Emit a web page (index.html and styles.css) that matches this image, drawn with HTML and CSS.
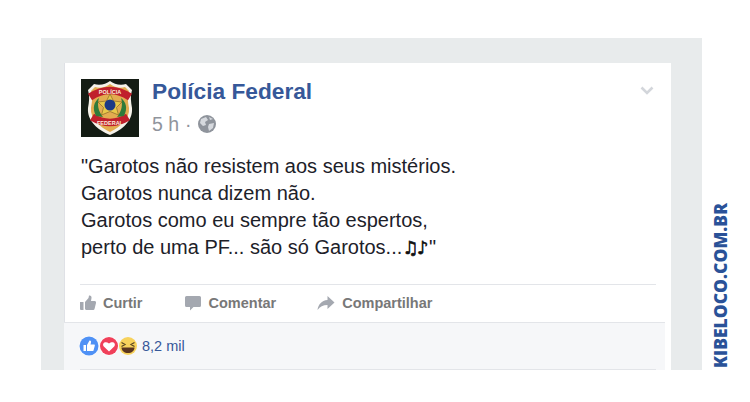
FILE: index.html
```html
<!DOCTYPE html>
<html lang="pt-BR">
<head>
<meta charset="utf-8">
<title>Polícia Federal</title>
<link rel="stylesheet" href="styles.css">
</head>
<body>
<div class="stage">
  <main class="panel">
    <article class="card">
      <header class="head">
        <svg class="avatar" viewBox="0 0 58 58" aria-label="Brasão da Polícia Federal">
          <rect width="58" height="58" fill="#141c14"/>
          <path d="M29 2 C33 5 39 7 45 5 L51 11 C49 17 50 23 51 29 C52 42 41 51 29 56 C17 51 6 42 7 29 C8 23 9 17 7 11 L13 5 C19 7 25 5 29 2Z" fill="#f6f2ea"/>
          <path d="M29 5 C33 8 39 10 44 8 L48 12 C46 18 47 23 48 29 C49 40 39 48 29 53 C19 48 9 40 10 29 C11 23 12 18 10 12 L14 8 C19 10 25 8 29 5Z" fill="#e3ac50"/>
          <path d="M9 18 Q29 5 49 18" fill="none" stroke="#c0202c" stroke-width="7.500"/>
          <text class="badge-text" x="29" y="15" text-anchor="middle">POLÍCIA</text>
          <path d="M11 38 Q29 49 47 38" fill="none" stroke="#c0202c" stroke-width="7.500"/>
          <text class="badge-text" x="29" y="46" text-anchor="middle">FEDERAL</text>
          <path d="M15 37 C11 29 13 23 18 19 C16 25 17 32 22 38Z M43 37 C47 29 45 23 40 19 C42 25 41 32 36 38Z" fill="#2f7a3a"/>
          <path d="M29 15 L32.500 22 L41 23 L35.500 28.500 L37.500 36 L29 32.500 L20.500 36 L22.500 28.500 L17 23 L25.500 22Z" fill="#e8c84a" stroke="#7a5a20" stroke-width=".6"/>
          <circle cx="29" cy="26" r="5.500" fill="#1c3a86"/>
        </svg>
        <div class="meta">
          <a class="name">Polícia Federal</a>
          <div class="time">
            <span>5 h</span><span class="dot">·</span>
            <svg class="globe" viewBox="0 0 18 18"><circle cx="9" cy="9" r="9" fill="#8f949c"/><path d="M3 4 L8 2 L10 5 L7 7 L8 10 L5 11 L2 8Z M11 9 L16 8 L15 13 L11 16 L10 12Z M11 2 L15 4 L12 5Z" fill="#d6d9de"/></svg>
          </div>
        </div>
        <svg class="chevron" viewBox="0 0 14 9"><path d="M1.500 1.500 L7 7 L12.500 1.500" fill="none" stroke="#d3d6db" stroke-width="2.600"/></svg>
      </header>
      <div class="message">
        <p>"Garotos não resistem aos seus mistérios.</p>
        <p>Garotos nunca dizem não.</p>
        <p>Garotos como eu sempre tão espertos,</p>
        <p>perto de uma PF... são só Garotos...<span class="notes">♫♪</span>"</p>
      </div>
      <nav class="actions">
        <a class="action act-like">
          <svg viewBox="0 0 16 16"><path d="M0 7h3.500v8H1a1 1 0 0 1-1-1Z M5 7 8.500 3 9 0.500c1.500-.5 2.800.8 2.500 2.500L11 6h3.500c1.300 0 1.800 1 1.500 2l-1.500 6c-.2.700-.8 1-1.500 1H7c-1 0-2-.6-2-1Z" fill="#a4a8b0"/></svg>
          Curtir</a>
        <a class="action act-comment">
          <svg viewBox="0 0 16 16"><path d="M1.500 1h13A1.500 1.500 0 0 1 16 2.500v8a1.500 1.500 0 0 1-1.500 1.500H8.500L5 15.500V12H1.500A1.500 1.500 0 0 1 0 10.500v-8A1.500 1.500 0 0 1 1.500 1Z" fill="#a4a8b0"/></svg>
          Comentar</a>
        <a class="action act-share">
          <svg viewBox="0 0 17 16"><path d="M10 1 17 7.500 10 14V10C5.500 10 2.500 11.500 0 15 .8 9.500 4 5.500 10 5Z" fill="#a4a8b0"/></svg>
          Compartilhar</a>
      </nav>
      <footer class="reactions">
        <div class="reaction-row">
          <svg class="faces" viewBox="0 0 58 20">
            <circle cx="49" cy="10" r="9" fill="#f7d25c"/>
            <path d="M42.500 6.500l3.500 2-3.500 2M55.500 6.500l-3.500 2 3.500 2" fill="none" stroke="#5a4520" stroke-width="1.200"/>
            <path d="M42.500 11.500h13c0 3.500-3 5.500-6.500 5.500s-6.500-2-6.500-5.500Z" fill="#5a3520"/>
            <circle cx="30" cy="10" r="9.500" fill="#fff"/>
            <circle cx="30" cy="10" r="9" fill="#f0405a"/>
            <path d="M30 15.500 24.800 10.500c-2.300-3 1.500-6 5.200-3 3.700-3 7.500 0 5.200 3Z" fill="#fff"/>
            <circle cx="10" cy="10" r="10" fill="#fff"/>
            <circle cx="10" cy="10" r="9.500" fill="#4f91f5"/>
            <path d="M4.500 9h2.500v6H4.500Z M8 9 10.500 4.500c1.200-.3 1.800.6 1.500 2L11.500 8.500H15c.8 0 1 .7.800 1.300L14.500 14.500c-.1.400-.4.500-.8.500H8Z" fill="#fff"/>
          </svg>
          <span class="count">8,2 mil</span>
        </div>
      </footer>
    </article>
  </main>
  <aside class="mark">KIBELOCO.COM.BR</aside>
</div>
</body>
</html>
```

FILE: styles.css
```css
* { box-sizing: border-box; }
html, body { margin: 0; padding: 0; background: #fff; }
body { width: 750px; height: 402px; overflow: hidden; font-family: "Liberation Sans", Arial, sans-serif; }
p { margin: 0; }

.stage { display: flex; align-items: flex-start; padding: 38px 0 0 41px; }

.panel {
  width: 661px;
  height: 332px;
  padding: 25px 31px 0 23px;
  background: #e8ebec;
}

.card {
  width: 607px;
  height: 307px;
  background: #fff;
  box-shadow: inset 1px 0 0 #dfe1e6;
  display: flex;
  flex-direction: column;
}

.head { display: flex; padding: 16px 17px 0 17px; height: 74px; }
.avatar { width: 58px; height: 58px; flex: none; }
.badge-text { font-family: "Liberation Sans", sans-serif; font-size: 5.500px; font-weight: 700; fill: #fbeede; }
.meta { margin-left: 13px; flex: 1; margin-top: -1px; }
.name { display: block; font-size: 22.700px; line-height: 26px; font-weight: 700; color: #365899; }
.time { display: flex; align-items: center; margin-top: 8px; font-size: 19.500px; line-height: 24px; color: #90949c; }
.dot { margin: 0 6px; }
.globe { width: 18px; height: 18px; }
.chevron { width: 14px; height: 9px; margin-top: 7px; }

.message { padding: 16px 16px 0 17px; height: 147px; font-size: 20px; line-height: 27px; color: #1d2129; }
.notes { font-family: "DejaVu Sans", sans-serif; font-size: 18px; letter-spacing: -1.500px; color: #111; margin-right: 2px; -webkit-text-stroke: .6px #111; }

.actions {
  display: flex;
  margin: 0 15px 0 16px;
  height: 38px;
  padding-bottom: 2px;
  align-items: center;
  border-top: 1px solid #e3e5e9;
  font-size: 14.500px;
  font-weight: 700;
  color: #787878;
}
.action { display: flex; align-items: center; }
.action svg { width: 16px; height: 16px; margin-right: 7px; }
.act-comment { margin-left: 43px; }
.act-share { margin-left: 41px; }
.act-share svg { width: 18px; }

.reactions { width: 601px; height: 48px; background: #f6f7f9; border-top: 1px solid #e3e5e9; padding: 0 9px 0 16px; }
.reaction-row { height: 47px; display: flex; align-items: center; border-bottom: 1px solid #e3e5e9; }
.faces { width: 58px; height: 20px; flex: none; margin-left: -1px; }
.count { margin-left: 5px; font-size: 14.500px; color: #365899; }

.mark {
  margin: 165px 0 0 10px;
  writing-mode: vertical-rl;
  transform: rotate(180deg);
  font-family: "Open Sans", sans-serif;
  font-size: 17.500px;
  line-height: 17px;
  font-weight: 800;
  color: #2a5298;
}
```
